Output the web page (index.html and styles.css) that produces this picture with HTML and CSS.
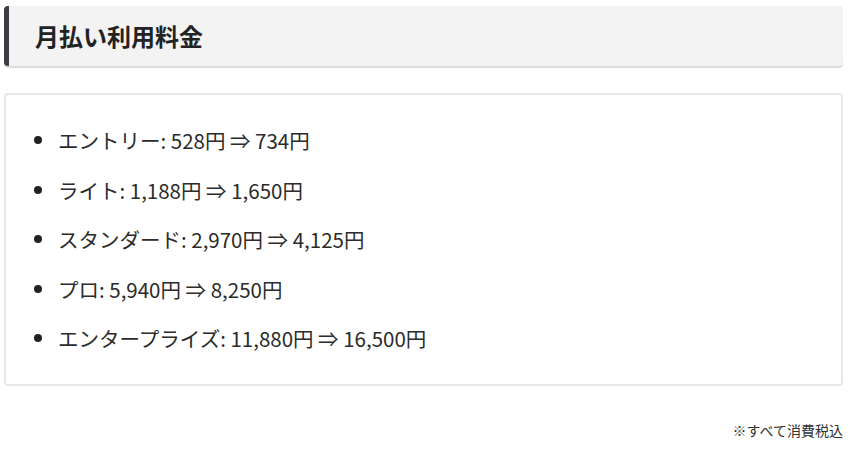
FILE: index.html
```html
<!DOCTYPE html>
<html lang="ja">
<head>
<meta charset="utf-8">
<link rel="stylesheet" href="styles.css">
</head>
<body>
<div class="page">
  <h2 class="heading">月払い利用料金</h2>
  <div class="box">
    <ul class="plans">
      <li>エントリー: 528円 ⇒ 734円</li>
      <li>ライト: 1,188円 ⇒ 1,650円</li>
      <li>スタンダード: 2,970円 ⇒ 4,125円</li>
      <li>プロ: 5,940円 ⇒ 8,250円</li>
      <li>エンタープライズ: 11,880円 ⇒ 16,500円</li>
    </ul>
  </div>
  <p class="note">※すべて消費税込</p>
</div>
</body>
</html>
```
FILE: styles.css
```css
html, body {
  margin: 0;
  padding: 0;
  background: #fff;
}
body {
  font-family: "Noto Sans CJK JP", "Noto Sans", sans-serif;
  color: #333;
}
.page {
  padding: 6px 9px 0 4px;
}
.heading {
  margin: 0;
  height: 60px;
  display: flex;
  align-items: center;
  padding-left: 26px;
  background: #f3f3f3;
  border-left: 5px solid #3c3c42;
  border-radius: 4px;
  box-shadow: 0 2px 0 #dddddd;
  font-size: 24px;
  font-weight: 700;
  color: #222;
  line-height: 1;
}
.box {
  margin-top: 27px;
  border: 2px solid #e8e8e8;
  border-radius: 4px;
  padding: 30px 0 31px;
}
.plans {
  margin: 0;
  padding: 0 0 0 28px;
  list-style: none;
  display: flex;
  flex-direction: column;
  gap: 19.6px;
  font-size: 20.5px;
  color: #2b2b2b;
}
.plans li {
  line-height: 30px;
  display: flex;
  align-items: center;
}
.plans li::before {
  content: "";
  width: 8px;
  height: 8px;
  border-radius: 50%;
  background: #222;
  margin-right: 16px;
  flex: none;
}
.note {
  margin: 34px 0 0;
  text-align: right;
  font-size: 14px;
  line-height: 20px;
  color: #333;
}
```
